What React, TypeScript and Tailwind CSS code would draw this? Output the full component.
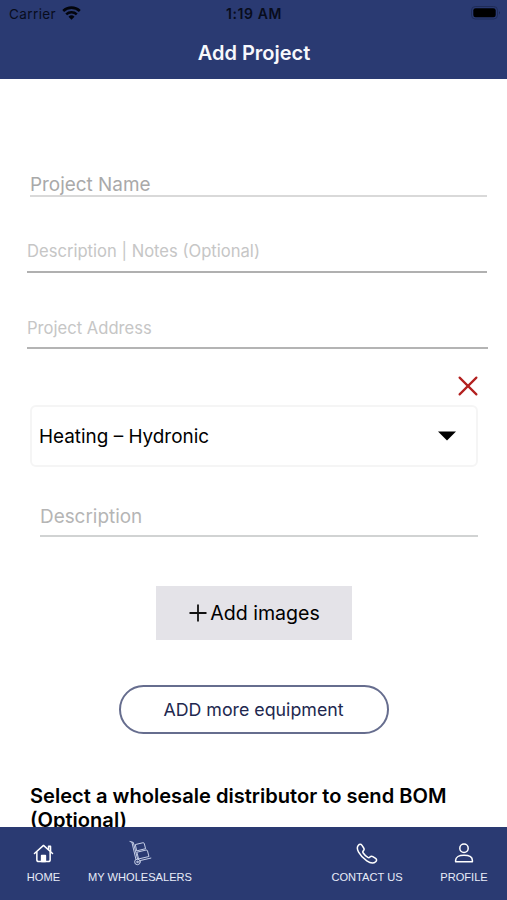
import React from "react";

const TruckIcon = () => (
  <svg width="23" height="26" viewBox="0 0 24 27" fill="none" stroke="#cdd5ec" strokeWidth="1" strokeLinejoin="round" strokeLinecap="round">
    <path d="M1 1.5 L4.5 2.5 L9 20" />
    <path d="M3 2.2 L7.2 20" />
    <path d="M7 4.6 L14.5 2.8 Q15.7 2.6 16 3.8 L17.3 9 L8.4 11.2 Z" />
    <path d="M8.6 12.6 L17.8 10.4 Q19 10.2 19.3 11.2 L20.8 17.2 L10.4 19.6 Z" />
    <path d="M12 21.3 L22.8 18.8" />
    <circle cx="8.8" cy="22.8" r="2.9" />
    <circle cx="8.8" cy="22.8" r="0.8" />
  </svg>
);

const HomeIcon = () => (
  <svg width="21" height="19" viewBox="0 0 22 20" fill="none" stroke="#fff" strokeWidth="1.6" strokeLinejoin="round" strokeLinecap="round">
    <path d="M1.5 10 L11 1.5 L20.5 10" />
    <path d="M16.3 5.5 V2.5 H18.4 V7.8" />
    <path d="M4 8.8 V16.5 Q4 18.5 6 18.5 H16 Q18 18.5 18 16.5 V8.8" />
    <path d="M9 18.5 V12 H13 V18.5 Z" fill="#fff" />
  </svg>
);

const PhoneIcon = () => (
  <svg width="22" height="21" viewBox="0 0 22 21" fill="none" stroke="#fff" strokeWidth="1.5" strokeLinejoin="round">
    <path d="M2.2 2.5 C3.5 1 5 1 6 2.4 L7.7 5 C8.4 6.1 8.2 7.1 7.3 7.9 C6.6 8.6 6.6 9.2 7.2 10 C8.5 11.9 10 13.3 11.8 14.4 C12.6 14.9 13.3 14.8 13.9 14.1 C14.7 13.2 15.8 13 16.8 13.6 L19.6 15.4 C20.9 16.3 20.9 17.6 19.7 18.7 C17.5 20.7 14.3 20.2 10.8 17.9 C7.6 15.8 4.4 12.5 2.6 9.2 C1.2 6.6 0.9 4.1 2.2 2.5 Z" />
  </svg>
);

const ProfileIcon = () => (
  <svg width="20" height="20" viewBox="0 0 20 20" fill="none" stroke="#fff" strokeWidth="1.5" strokeLinejoin="round">
    <circle cx="10" cy="5.2" r="4.2" />
    <path d="M1.6 18.8 V17.4 C1.6 14 5 12.3 10 12.3 C15 12.3 18.4 14 18.4 17.4 V18.8 Z" />
  </svg>
);

const tabs = [
  { label: "HOME", icon: <HomeIcon />, className: "ml-[22px] w-[43px]" },
  { label: "MY WHOLESALERS", icon: <TruckIcon />, className: "ml-[20px] w-[110px]" },
  { label: "CONTACT US", icon: <PhoneIcon />, className: "ml-auto w-[80px]" },
  { label: "PROFILE", icon: <ProfileIcon />, className: "mr-[13px] ml-[27px] w-[60px]" },
];

const Header = () => (
  <header className="flex h-[79px] shrink-0 flex-col bg-[#2a3a72]">
    <div className="grid h-[28px] grid-cols-3 items-center text-[13.5px] text-[#080c1c]">
      <div className="flex items-center gap-1.5 pl-[9px]">
        <span className="tracking-[0.4px]">Carrier</span>
        <svg width="19" height="14" viewBox="0 0 19 14" className="-mt-[3px]" fill="none" stroke="#03050c" strokeWidth="2.6">
          <path d="M1.2 5 A12 12 0 0 1 17.8 5" />
          <path d="M4.2 8.4 A7.8 7.8 0 0 1 14.8 8.4" />
          <path d="M9.5 13.8 L6.5 10.7 A4.3 4.3 0 0 1 12.5 10.7 Z" fill="#03050c" stroke="none" />
        </svg>
      </div>
      <div className="-mt-[2px] pl-px text-center text-[14px] font-semibold tracking-[0.6px]">1:19 AM</div>
      <div className="flex items-center justify-end pr-[6px]">
        <svg width="30" height="14" viewBox="0 0 30 14" className="-mt-[2px]">
          <rect x="0.5" y="0.5" width="26" height="12.5" rx="3.8" fill="none" stroke="#1f2c58" />
          <rect x="2.3" y="2.3" width="22.4" height="9" rx="2.3" fill="#000" />
          <path d="M28 5 Q29.3 6.7 28 8.5 Z" fill="#111a38" />
        </svg>
      </div>
    </div>
    <h1 className="mt-[9px] pl-px text-center text-[20px] leading-[32px] font-semibold text-[#f7f8fc]">Add Project</h1>
  </header>
);

export default function App() {
  return (
    <div className="flex h-[900px] w-[507px] flex-col overflow-hidden bg-white font-['Inter','Liberation_Sans',sans-serif] text-black">
      <Header />

      <main className="flex min-h-0 flex-1 flex-col overflow-hidden">
        <div className="mt-[92px] mr-[20px] ml-[30px] h-[26px] shrink-0 border-b-2 border-[#d9d9d9] text-[18.9px] leading-[27px] text-[#a9a9a9]">
          <span>Project Name</span>
        </div>
        <div className="mt-[41px] mr-[20px] ml-[27px] h-[35px] shrink-0 border-b-2 border-[#b0b0b0] text-[16.6px] leading-[26px] text-[#c6c6c6]">
          <span>Description | Notes (Optional)</span>
        </div>
        <div className="mt-[42px] mr-[19px] ml-[27px] h-[34px] shrink-0 border-b-2 border-[#b4b4b4] text-[16.6px] leading-[26px] text-[#c6c6c6]">
          <span>Project Address</span>
        </div>

        <div className="mt-[27px] mr-[29px] flex shrink-0 justify-end">
          <svg width="20" height="20" viewBox="0 0 20 20" stroke="#b3201f" strokeWidth="2.2" strokeLinecap="round">
            <path d="M1.6 1.6 L18.4 18.4 M18.4 1.6 L1.6 18.4" />
          </svg>
        </div>

        <div className="mt-[9px] mr-[29px] ml-[30px] flex h-[62px] shrink-0 items-center justify-between rounded-[6px] border-2 border-[#f5f5f5] pr-[20px] pl-[7px]">
          <span className="pt-[2px] text-[18.9px]">Heating – Hydronic</span>
          <svg width="18" height="10" viewBox="0 0 18 10">
            <path d="M0 0.4 H18 L9 9.6 Z" />
          </svg>
        </div>

        <div className="mt-[37px] mr-[29px] ml-[40px] h-[33px] shrink-0 border-b-2 border-[#d1d3d3] text-[18.9px] leading-[26px] text-[#b5b5b5]">
          <span>Description</span>
        </div>

        <button className="mt-[49px] flex h-[54px] w-[196px] shrink-0 items-center justify-center gap-[3px] self-center bg-[#e4e3e8] pl-[2px] text-[19.6px]">
          <svg width="18" height="18" viewBox="0 0 18 18" stroke="#111" strokeWidth="1.8">
            <path d="M9 0.5 V17.5 M0.5 9 H17.5" />
          </svg>
          <span className="pt-[2px]">Add images</span>
        </button>

        <button className="mt-[45px] flex h-[49px] w-[270px] shrink-0 items-center justify-center self-center rounded-full border-2 border-[#666d8e] text-[17.8px] text-[#22284f]">
          <span className="pt-[2px]">ADD more equipment</span>
        </button>

        <h2 className="mt-[50px] ml-[30px] shrink-0 text-[20.1px] leading-[24px] font-semibold">
          <span>Select a wholesale distributor to send BOM</span>
          <br />
          <span>(Optional)</span>
        </h2>
      </main>

      <nav className="flex h-[73px] shrink-0 bg-[#2a3a72] text-[#e8ecf8]">
        {tabs.map((tab) => (
          <div key={tab.label} className={`flex flex-col items-center ${tab.className}`}>
            <div className="mt-[12px] flex h-[28px] items-center">{tab.icon}</div>
            <span className="mt-[3px] font-['Liberation_Sans',sans-serif] text-[11.1px] leading-[14px] whitespace-nowrap">
              {tab.label}
            </span>
          </div>
        ))}
      </nav>
    </div>
  );
}
